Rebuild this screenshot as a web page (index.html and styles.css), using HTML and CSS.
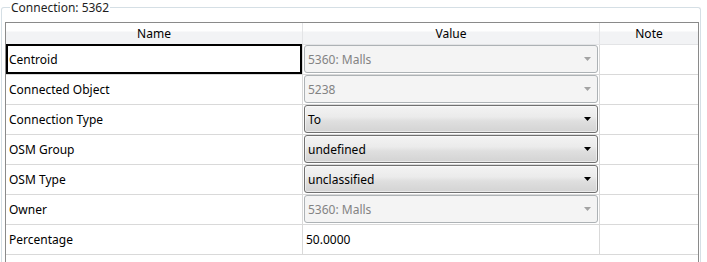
FILE: index.html
```html
<!DOCTYPE html>
<html lang="en">
<head>
<meta charset="UTF-8" />
<title>Connection 5362</title>
<link rel="stylesheet" href="styles.css">
</head>
<body>
  <fieldset class="group">
    <legend>Connection: 5362</legend>

    <div class="props">
      <div class="head">Name</div>
      <div class="head">Value</div>
      <div class="head last">Note</div>

      <div class="cell name focused">Centroid</div>
      <div class="cell value"><div class="combo disabled"><span>5360: Malls</span><svg width="7" height="4"><path d="M0 0h7L3.5 4z"/></svg></div></div>
      <div class="cell last"></div>

      <div class="cell name">Connected Object</div>
      <div class="cell value"><div class="combo disabled"><span>5238</span><svg width="7" height="4"><path d="M0 0h7L3.5 4z"/></svg></div></div>
      <div class="cell last"></div>

      <div class="cell name">Connection Type</div>
      <div class="cell value"><div class="combo"><span>To</span><svg width="7" height="4"><path d="M0 0h7L3.5 4z"/></svg></div></div>
      <div class="cell last"></div>

      <div class="cell name">OSM Group</div>
      <div class="cell value"><div class="combo"><span>undefined</span><svg width="7" height="4"><path d="M0 0h7L3.5 4z"/></svg></div></div>
      <div class="cell last"></div>

      <div class="cell name">OSM Type</div>
      <div class="cell value"><div class="combo"><span>unclassified</span><svg width="7" height="4"><path d="M0 0h7L3.5 4z"/></svg></div></div>
      <div class="cell last"></div>

      <div class="cell name">Owner</div>
      <div class="cell value"><div class="combo disabled"><span>5360: Malls</span><svg width="7" height="4"><path d="M0 0h7L3.5 4z"/></svg></div></div>
      <div class="cell last"></div>

      <div class="cell name">Percentage</div>
      <div class="cell value text">50.0000</div>
      <div class="cell last"></div>
    </div>
  </fieldset>
</body>
</html>
```

FILE: styles.css
```css
* {
  box-sizing: border-box;
}

html {
  overflow: hidden;
}

body {
  margin: 0;
  background: #fff;
  color: #000;
  font-family: 'Noto Sans', 'Liberation Sans', sans-serif;
  font-size: 12px;
}

/* group box round the grid, cut off at the window bottom */
.group {
  width: 700px;
  height: 262px;
  margin: 0 0 0 1px;
  padding: 7px 1px 0 3px;
  border: 1px solid #d5dfe5;
  border-bottom: none;
  border-radius: 3px 3px 0 0;
}

.group legend {
  margin-left: 5px;
  padding: 0 1px;
  line-height: 15px;
  color: #1e1e1e;
}

/* property grid */
.props {
  display: grid;
  grid-template-columns: 297px 297px 98px;
  grid-auto-rows: 30px;
  grid-template-rows: 22px;
  width: 694px;
  height: 240px;
  align-content: start;
  border: 1px solid #8a8a8a;
  border-bottom: none;
  overflow: hidden;
}

.head {
  display: flex;
  align-items: center;
  justify-content: center;
  background: linear-gradient(#ffffff 0, #ffffff 35%, #f2f3f5 45%, #f2f3f5 100%);
  border-right: 1px solid #e3e4e6;
  border-bottom: 1px solid #e3e4e6;
  padding-bottom: 1px;
}

.cell {
  display: flex;
  align-items: center;
  border-right: 1px solid #d9d9d9;
  border-bottom: 1px solid #d9d9d9;
}

.last {
  border-right: none;
}

.name {
  padding-left: 3px;
}

.focused {
  box-shadow: inset 0 0 0 2px #000;
  margin-top: -1px;
}

.value {
  padding: 0 1px;
}

.value.text {
  padding-left: 3px;
}

/* drop-down boxes */
.combo {
  display: flex;
  align-items: center;
  justify-content: space-between;
  width: 100%;
  height: 28px;
  padding: 0 6px 0 3px;
  border: 1px solid #707070;
  border-radius: 3px;
  background: linear-gradient(#f3f3f3 0, #ebebeb 42%, #dfdfdf 58%, #d3d3d3 100%);
  box-shadow: inset 0 0 0 1px rgba(255, 255, 255, 0.5);
  margin-bottom: 1px;
}

.combo path {
  fill: #000;
}

.combo.disabled {
  background: #f4f4f4;
  border-color: #adb2b5;
  color: #838383;
  box-shadow: none;
}

.combo.disabled path {
  fill: #a3a3a3;
}
```
